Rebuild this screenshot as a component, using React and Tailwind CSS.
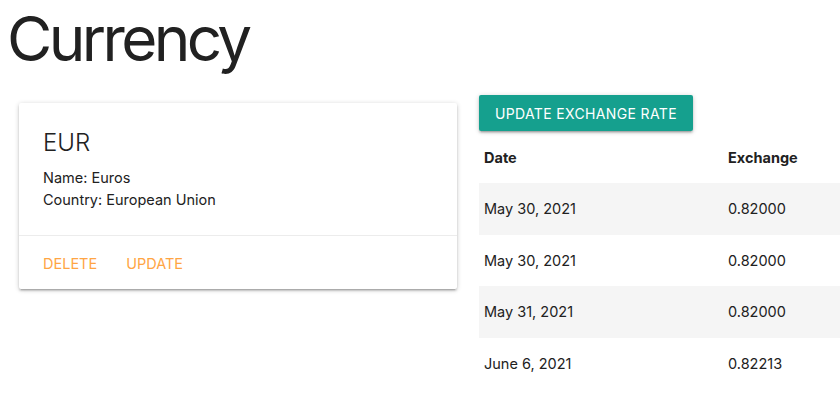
import React from 'react';

const rates = [
  { date: 'May 30, 2021', value: '0.82000' },
  { date: 'May 30, 2021', value: '0.82000' },
  { date: 'May 31, 2021', value: '0.82000' },
  { date: 'June 6, 2021', value: '0.82213' },
];

const cardShadow =
  'shadow-[0_2px_2px_0_rgba(0,0,0,0.14),0_3px_1px_-2px_rgba(0,0,0,0.12),0_1px_5px_0_rgba(0,0,0,0.2)]';

const App = () => {
  return (
    <div className="w-[840px] h-[420px] overflow-hidden bg-white text-[#212121] font-['Inter',sans-serif] text-[14.5px] leading-[1.5]">
      <div className="h-[95px] pl-[7px] pt-[3px]">
        <h1 className="text-[62px] leading-[72px] tracking-[-3.6px] font-normal">Currency</h1>
      </div>

      <div className="flex w-[936px] pl-[8.5px]">
        {/* currency card */}
        <div className="w-[459px] px-[10.5px] flex-shrink-0">
          <div className={`mt-[8px] bg-white rounded-[2px] ${cardShadow}`}>
            <div className="p-6">
              <div className="text-[24px] leading-[32px] font-light mb-2">EUR</div>
              <p>Name: Euros</p>
              <p>Country: European Union</p>
            </div>
            <div className="border-t border-[rgba(160,160,160,0.2)] px-6 pt-[17px] pb-[15px] flex gap-[29px]">
              <a className="text-[#ffa544] uppercase cursor-pointer">Delete</a>
              <a className="text-[#ffa544] uppercase cursor-pointer">Update</a>
            </div>
          </div>
        </div>

        {/* exchange rates */}
        <div className="w-[459px] pl-[11.5px] pr-[10.5px] flex-shrink-0">
          <button className={`h-9 px-4 bg-[#15a08e] text-white uppercase text-[14px] tracking-[0.35px] rounded-[2px] ${cardShadow}`}>
            Update Exchange Rate
          </button>
          <table className="w-[438px] border-collapse text-left">
            <thead>
              <tr>
                <th className="w-[244px] px-[5px] pt-[16px] pb-[14px] font-bold">Date</th>
                <th className="px-[5px] pt-[16px] pb-[14px] font-bold">Exchange</th>
              </tr>
            </thead>
            <tbody>
              {rates.map((rate, i) => (
                <tr key={i} className={i % 2 === 0 ? 'bg-[#f5f5f5]' : 'bg-white'}>
                  <td className="px-[5px] py-[15px]">{rate.date}</td>
                  <td className="px-[5px] py-[15px]">{rate.value}</td>
                </tr>
              ))}
            </tbody>
          </table>
        </div>
      </div>
    </div>
  );
};

export default App;
